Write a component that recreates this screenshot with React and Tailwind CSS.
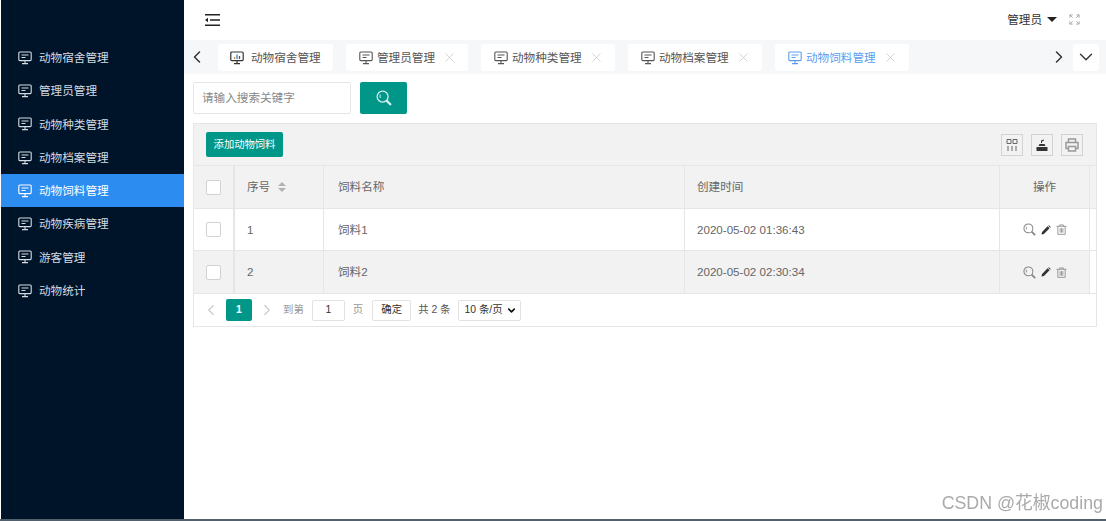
import { ChevronLeft, ChevronRight, ChevronDown, X } from "lucide-react";

const menus = ["动物宿舍管理", "管理员管理", "动物种类管理", "动物档案管理", "动物饲料管理", "动物疾病管理", "游客管理", "动物统计"];

const tabs = [
  { name: "动物宿舍管理", w: "w-[115px]", first: true },
  { name: "管理员管理", w: "w-[122px]" },
  { name: "动物种类管理", w: "w-[134px]" },
  { name: "动物档案管理", w: "w-[134px]" },
  { name: "动物饲料管理", w: "w-[134px]", active: true },
];

const rows = [
  { id: 1, name: "饲料1", time: "2020-05-02 01:36:43", h: "h-[42px]" },
  { id: 2, name: "饲料2", time: "2020-05-02 02:30:34", h: "h-[43px]", gray: true },
];

const cols = "grid grid-cols-[41px_89px_361px_315px_90px_1fr]";

const Monitor = ({ className }) => (
  <svg viewBox="0 0 14 14" className={className} fill="none" stroke="currentColor" strokeWidth="1.1">
    <rect x="0.8" y="1" width="12.4" height="8.6" rx="1" />
    <path d="M3.5 4h7M3.5 6.5h4M7 9.6v2.4M4 12.6h6" />
  </svg>
);

// first tab has the chart version of the monitor
const MonitorChart = ({ className }) => (
  <svg viewBox="0 0 14 14" className={className} fill="none" stroke="#333" strokeWidth="1.2">
    <rect x="0.8" y="1" width="12.4" height="8.6" rx="1" />
    <path d="M7 9.6v2.4M4 12.6h6" />
    <path d="M4.500 8V6" stroke="#c98a3a" strokeWidth="1.300" />
    <path d="M7 8V3.500" stroke="#3d7fc4" strokeWidth="1.300" />
    <path d="M9.500 8V5" stroke="#555" strokeWidth="1.300" />
  </svg>
);

const Search = ({ className }) => (
  <svg viewBox="0 0 14 14" className={className} fill="none" stroke="currentColor">
    <circle cx="5.8" cy="5.8" r="4.8" strokeWidth="1.1" />
    <path d="M9.3 9.3l3.8 3.8" strokeWidth="2" />
    <path d="M3.6 4v3" strokeWidth="0.9" />
  </svg>
);

const RowActions = () => (
  <div className="flex items-center justify-center gap-[5px]">
    <Search className="w-[13px] h-[13px] text-[#888]" />
    <svg viewBox="0 0 12 12" className="w-[10px] h-[10px] text-[#333]" fill="currentColor">
      <path d="M0.5 11.500l0.800-3 6.600-6.900 2.400 2.300-6.800 6.800zM8.600 0.900l0.800-0.700 2.300 2.300-0.700 0.800z" />
    </svg>
    <svg viewBox="0 0 12 12" className="w-[11px] h-[11px] text-[#888]" fill="none" stroke="currentColor">
      <path d="M0.500 2.500h11M4 2.500V1h4v1.500M2 2.500V11.300h8V2.500M4.500 4.500v5M6 4.500v5M7.500 4.500v5" strokeWidth="0.9" />
    </svg>
  </div>
);

const Checkbox = () => (
  <div className="w-[15px] h-[15px] bg-white border border-[#d2d2d2] rounded-[2px]" />
);

export default function App() {
  return (
    <div
      className="w-[1106px] h-[521px] flex overflow-hidden bg-white text-[11.6px] text-[#666]"
      style={{ fontFamily: '"Liberation Sans", "Noto Sans CJK SC", sans-serif' }}
    >
      <aside className="w-[183px] ml-px h-[519px] bg-[#001429] pt-[41px] shrink-0">
        {menus.map((m, i) => (
          <div
            key={m}
            className={`h-[33.3px] flex items-center pl-[17px] gap-[7px] ${i === 4 ? "bg-[#2d8cf0] text-white" : "text-[#d5dbe2]"}`}
          >
            <Monitor className="w-[14px] h-[14px]" />
            <span>{m}</span>
          </div>
        ))}
      </aside>

      <main className="flex-1 min-w-0">
        <header className="h-[40px] flex items-center justify-between pl-[21px] pr-[26px]">
          <svg viewBox="0 0 15 12" className="w-[15px] h-[12px] text-[#222]" fill="currentColor">
            <path d="M0 0h15v1.400H0zM5 5.300h10v1.400H5zM0 10.600h15V12H0zM0 6l3-2.200v4.400z" />
          </svg>
          <div className="flex items-center text-[#333]">
            <span>管理员</span>
            <span className="ml-[5px] w-0 h-0 border-x-[5px] border-x-transparent border-t-[5px] border-t-[#222]" />
            <svg viewBox="0 0 12 12" className="ml-[12px] w-[11px] h-[11px] text-[#9aa5ad]" fill="none" stroke="currentColor" strokeWidth="1">
              <path d="M1 4V1h3M8 1h3v3M11 8v3H8M4 11H1V8M1 1l3 3M11 1L8 4M11 11L8 8M1 11l3-3" />
            </svg>
          </div>
        </header>

        <div className="h-[34px] bg-[#f5f7f9] flex items-center">
          <div className="w-[34px] flex justify-center shrink-0 pr-[8px]">
            <ChevronLeft className="w-[20px] h-[20px] text-[#333]" strokeWidth={1.8} />
          </div>
          <div className="flex gap-[13px]">
            {tabs.map((t) => (
              <div
                key={t.name}
                className={`${t.w} h-[27px] mt-px bg-white rounded-[3px] flex items-center gap-[4px] ${t.first ? "pl-[12px]" : "pl-[13px]"} ${t.active ? "text-[#5a9df0]" : "text-[#555]"}`}
              >
                {t.first ? <MonitorChart className="w-[14px] h-[14px] mr-[3px]" /> : <Monitor className="w-[14px] h-[14px]" />}
                <span className="mt-[1px]">{t.name}</span>
                {!t.first && <X className="w-[15px] h-[15px] ml-[3px] text-[#cfcfcf]" strokeWidth={1.4} />}
              </div>
            ))}
          </div>
          <ChevronRight className="w-[20px] h-[20px] text-[#333] ml-[140px]" strokeWidth={1.8} />
          <div className="w-[26px] h-[27px] ml-[4px] bg-white rounded-[3px] flex items-center justify-center">
            <ChevronDown className="w-[22px] h-[22px] text-[#333]" strokeWidth={1.5} />
          </div>
        </div>

        <div className="pl-[9px] pr-[9px]">
          <div className="flex gap-[9px] mt-[8px]">
            <div className="w-[158px] h-[32px] border border-[#e6e6e6] rounded-[2px] flex items-center pl-[8px] text-[#888]">
              请输入搜索关键字
            </div>
            <div className="w-[47px] h-[32px] bg-[#009688] rounded-[2px] flex items-center justify-center">
              <Search className="w-[16px] h-[16px] text-[#d5efec]" />
            </div>
          </div>

          <div className="mt-[9px] w-[904px] border border-[#e6e6e6]">
            <div className="h-[41px] bg-[#f2f2f2] flex items-center justify-between pl-[12px] pr-[13px]">
              <div className="h-[25px] w-[77px] bg-[#009688] rounded-[2px] flex items-center justify-center text-white text-[10.3px]">
                添加动物饲料
              </div>
              <div className="flex gap-[8px]">
                <div className="w-[22px] h-[22px] border border-[#d2d2d2] flex items-center justify-center">
                  <svg viewBox="0 0 12 12" className="w-[12px] h-[12px] text-[#666]" fill="none" stroke="currentColor">
                    <path d="M1 0.500h4v4H1zM7 0.500h4v4H7zM2 7v5M6 7v5M10 7v5" />
                  </svg>
                </div>
                <div className="w-[22px] h-[22px] border border-[#d2d2d2] flex items-center justify-center">
                  <svg viewBox="0 0 12 12" className="w-[12px] h-[12px] text-[#333]" fill="currentColor">
                    <path d="M0.500 8h11v4h-11zM2.500 7l1-2h5l1 2zM5 4V1.500l3-1v1L6 2.500V4z" />
                  </svg>
                </div>
                <div className="w-[22px] h-[22px] border border-[#d2d2d2] flex items-center justify-center">
                  <svg viewBox="0 0 14 14" className="w-[14px] h-[14px] text-[#999]" fill="none" stroke="currentColor" strokeWidth="1.5">
                    <path d="M3.500 4V1h7v3M3.500 10.500H1V4.500h12v6h-2.500M3.500 8.500h7V13h-7z" />
                  </svg>
                </div>
              </div>
            </div>

            <div className={`${cols} h-[43px] bg-[#f2f2f2] border-t border-[#e6e6e6] items-stretch`}>
              <div className="flex items-center justify-center pr-px border-r-2 border-[#e6e6e6]"><Checkbox /></div>
              <div className="flex items-center pl-[12px] border-r border-[#e6e6e6]">
                <span>序号</span>
                <span className="ml-[8px] flex flex-col gap-[2px]">
                  <span className="w-0 h-0 border-x-[4px] border-x-transparent border-b-[4px] border-b-[#b2b2b2]" />
                  <span className="w-0 h-0 border-x-[4px] border-x-transparent border-t-[4px] border-t-[#b2b2b2]" />
                </span>
              </div>
              <div className="flex items-center pl-[14px] border-r border-[#e6e6e6]">饲料名称</div>
              <div className="flex items-center pl-[12px] border-r border-[#e6e6e6]">创建时间</div>
              <div className="flex items-center justify-center border-r border-[#e6e6e6]">操作</div>
              <div />
            </div>

            {rows.map((r) => (
              <div key={r.id} className={`${cols} ${r.h} border-t border-[#e6e6e6] items-stretch`}>
                <div className={`flex items-center justify-center pr-px border-r-2 border-[#e6e6e6] ${r.gray ? "bg-[#f2f2f2]" : ""}`}><Checkbox /></div>
                <div className={`flex items-center pl-[12px] border-r border-[#e6e6e6] ${r.gray ? "bg-[#f2f2f2]" : ""}`}>{r.id}</div>
                <div className={`flex items-center pl-[14px] border-r border-[#e6e6e6] ${r.gray ? "bg-[#f2f2f2]" : ""}`}>{r.name}</div>
                <div className={`flex items-center pl-[12px] border-r border-[#e6e6e6] ${r.gray ? "bg-[#f2f2f2]" : ""}`}>{r.time}</div>
                <div className={`flex items-center justify-center border-r border-[#e6e6e6] ${r.gray ? "bg-[#f2f2f2]" : ""}`}><RowActions /></div>
                <div />
              </div>
            ))}

            <div className="h-[33px] border-t border-[#e6e6e6] flex items-center pl-[8px] text-[10.4px] whitespace-nowrap">
              <ChevronLeft className="w-[18px] h-[18px] text-[#c8c8c8]" strokeWidth={1.5} />
              <div className="ml-[6px] w-[26px] h-[22px] bg-[#009688] rounded-[2px] text-white flex items-center justify-center font-bold">1</div>
              <ChevronRight className="ml-[6px] w-[18px] h-[18px] text-[#c8c8c8]" strokeWidth={1.5} />
              <span className="ml-[7px] text-[#999]">到第</span>
              <div className="ml-[8px] w-[33px] h-[21px] border border-[#e2e2e2] rounded-[2px] flex items-center justify-center text-[#333]">1</div>
              <span className="ml-[8px] text-[#999]">页</span>
              <div className="ml-[9px] w-[39px] h-[21px] border border-[#e2e2e2] rounded-[2px] flex items-center justify-center text-[#333]">确定</div>
              <span className="ml-[7px] text-[#555]">共 2 条</span>
              <div className="ml-[7px] w-[63px] h-[21px] border border-[#e2e2e2] rounded-[2px] flex items-center justify-between pl-[6px] pr-[3px] text-[#333]">
                <span>10 条/页</span>
                <ChevronDown className="w-[11px] h-[11px] text-[#111]" strokeWidth={3.5} />
              </div>
            </div>
          </div>
        </div>
      </main>

      <div className="fixed right-[3px] bottom-[7px] text-[17.8px] leading-[22px] text-[#aaa]">CSDN @花椒coding</div>
      <div className="fixed left-0 right-0 bottom-0 h-[2px] bg-[#52606d]" />
    </div>
  );
}
